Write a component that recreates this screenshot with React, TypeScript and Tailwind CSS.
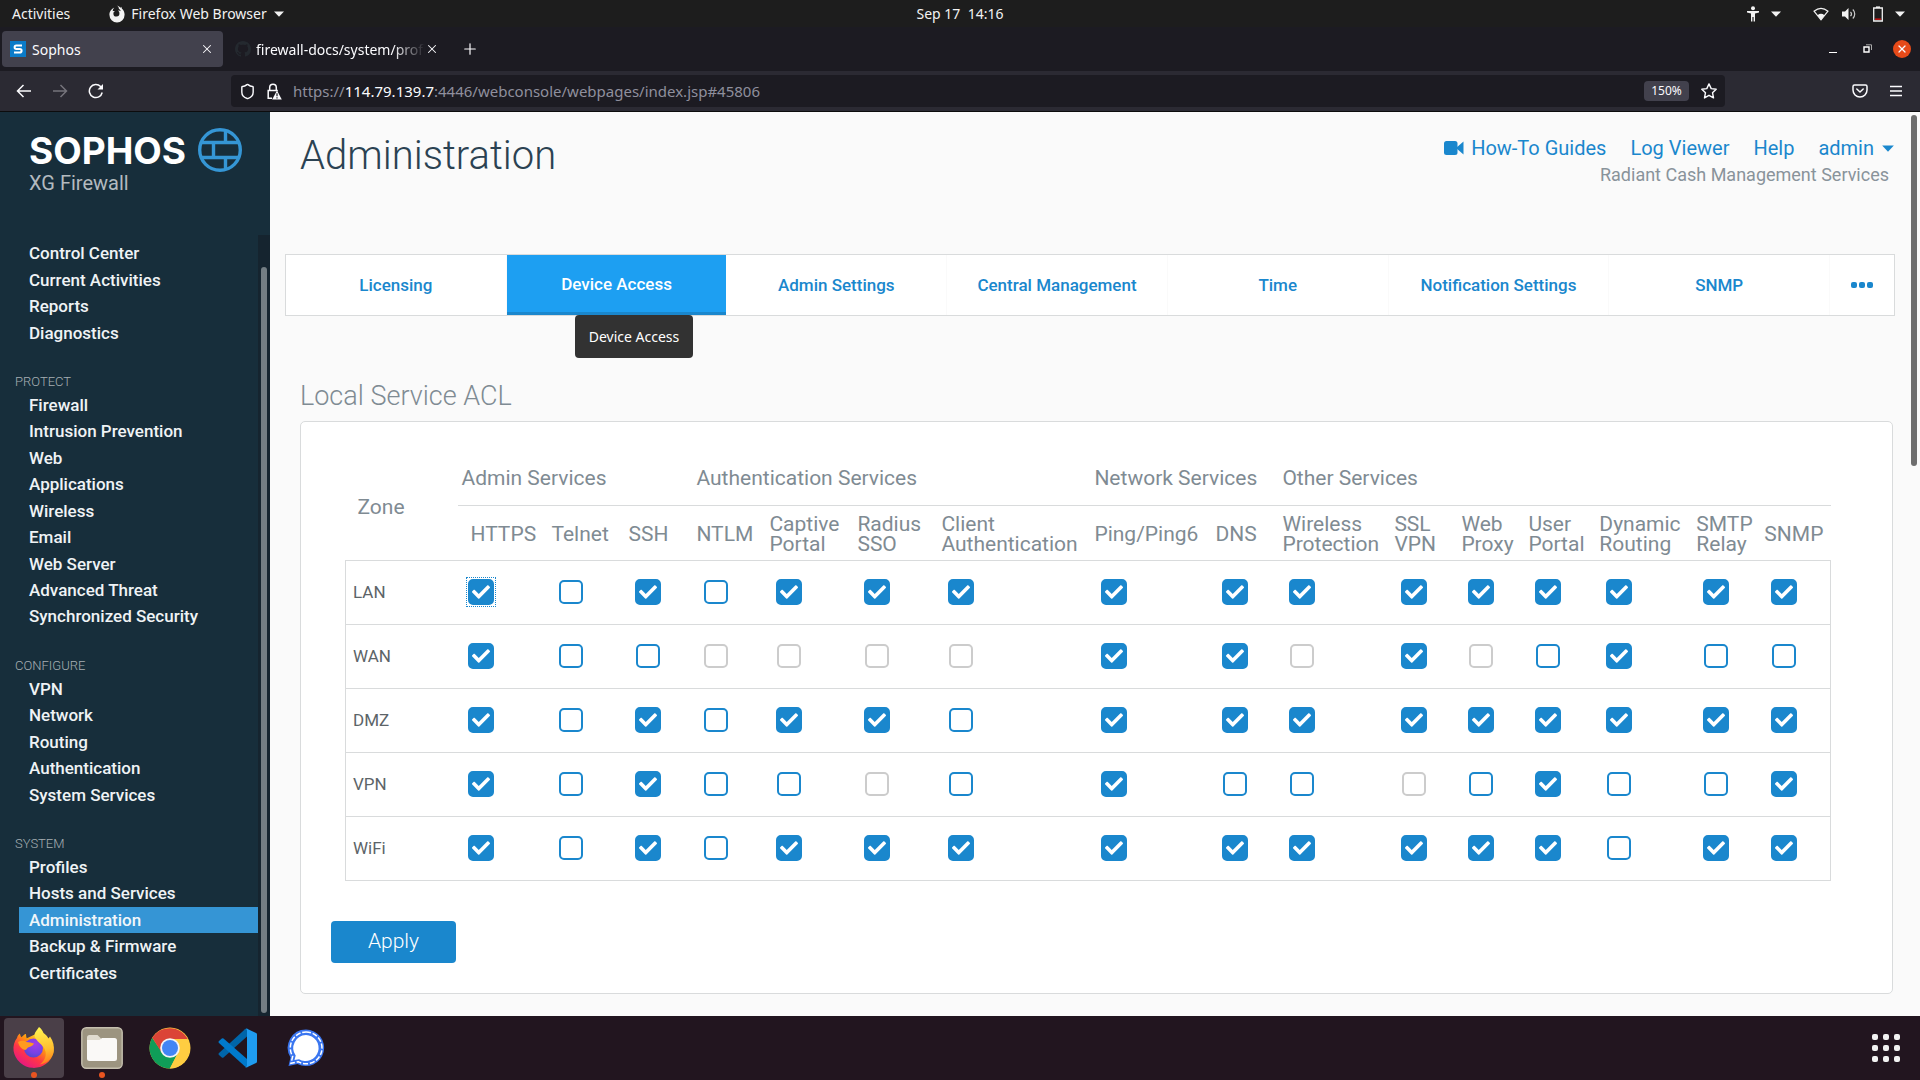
import React from "react";
import { FaCheck } from "react-icons/fa";
import { Plus, Shield, X } from "lucide-react";

type NavGroup = { title?: string; items: string[] };

const NAV: NavGroup[] = [
  { items: ["Control Center", "Current Activities", "Reports", "Diagnostics"] },
  {
    title: "PROTECT",
    items: [
      "Firewall",
      "Intrusion Prevention",
      "Web",
      "Applications",
      "Wireless",
      "Email",
      "Web Server",
      "Advanced Threat",
      "Synchronized Security",
    ],
  },
  { title: "CONFIGURE", items: ["VPN", "Network", "Routing", "Authentication", "System Services"] },
  {
    title: "SYSTEM",
    items: ["Profiles", "Hosts and Services", "Administration", "Backup & Firmware", "Certificates"],
  },
];

const TABS = [
  "Licensing",
  "Device Access",
  "Admin Settings",
  "Central Management",
  "Time",
  "Notification Settings",
  "SNMP",
];

const GROUPS = [
  { name: "Admin Services", span: 3 },
  { name: "Authentication Services", span: 4 },
  { name: "Network Services", span: 2 },
  { name: "Other Services", span: 7 },
];

const SERVICES: { lines: string[]; width: number }[] = [
  { lines: ["HTTPS"], width: 86 },
  { lines: ["Telnet"], width: 77 },
  { lines: ["SSH"], width: 68 },
  { lines: ["NTLM"], width: 73 },
  { lines: ["Captive", "Portal"], width: 88 },
  { lines: ["Radius", "SSO"], width: 84 },
  { lines: ["Client", "Authentication"], width: 153 },
  { lines: ["Ping/Ping6"], width: 121 },
  { lines: ["DNS"], width: 67 },
  { lines: ["Wireless", "Protection"], width: 112 },
  { lines: ["SSL", "VPN"], width: 67 },
  { lines: ["Web", "Proxy"], width: 67 },
  { lines: ["User", "Portal"], width: 71 },
  { lines: ["Dynamic", "Routing"], width: 97 },
  { lines: ["SMTP", "Relay"], width: 68 },
  { lines: ["SNMP"], width: 73 },
];
const ZONE_WIDTH = 113;
const TABLE_WIDTH = 1485;

/* x = on, o = off, d = disabled; one letter per service */
const ZONES = [
  { name: "LAN", state: "xoxoxxxxxxxxxxxx" },
  { name: "WAN", state: "xooddddxxdxdoxoo" },
  { name: "DMZ", state: "xoxoxxoxxxxxxxxx" },
  { name: "VPN", state: "xoxoodoxoodoxoox" },
  { name: "WiFi", state: "xoxoxxxxxxxxxoxx" },
];

function CaretDown({ className }: { className: string }) {
  return (
    <svg viewBox="0 0 10 6" className={className} fill="currentColor" aria-hidden="true">
      <path d="M0 0.5h10L5 5.8z" />
    </svg>
  );
}

function TopBar() {
  return (
    <div className="grid h-[27px] shrink-0 grid-cols-3 items-center bg-[#1d1d1d] text-[14px] text-[#f2f2f2]">
      <div className="flex items-center pl-3">
        <button>Activities</button>
        <button className="ml-[39px] flex items-center">
          <svg viewBox="0 0 16 18" className="mr-[6px] h-[18px] w-4" fill="#f2f2f2" aria-hidden="true">
            <path d="M8 .6c1.3 1 1.8 2 1.9 3.2 .9.5 1.6 1.3 1.9 2.4-.9-.7-1.8-.9-2.8-.7 1 .8 1.5 1.8 1.4 3a3 3 0 0 1-6 .2c0-1.2.6-2 1.6-2.6-.9-.2-1.6-.1-2.2.2-.1-1.300 .4-2.600 1.400-3.500C2.800 3.500 .4 6.400 .4 9.800a7.600 7.600 0 0 0 15.200 0c0-2.600-1-4.800-2.800-6.300l-.5-1.700-.7 1C10.700 1.900 9.500 1.100 8 .6z" />
          </svg>
          Firefox Web Browser
          <CaretDown className="ml-[7px] h-[6px] w-[10px]" />
        </button>
      </div>
      <div className="text-center whitespace-pre">Sep 17  14:16</div>
      <div className="flex items-center justify-end pr-[15px]">
        <svg viewBox="0 0 12 16" className="h-4 w-3" fill="#f2f2f2" aria-hidden="true">
          <circle cx="6" cy="2.200" r="2" />
          <path d="M0 5h12v1.600L8 7.400V15.500H6.600V11H5.400V15.500H4V7.400L0 6.600z" />
        </svg>
        <CaretDown className="ml-3 h-[6px] w-[10px]" />
        <svg viewBox="0 0 16 14" className="ml-8 h-[14px] w-4" aria-hidden="true">
          <path d="M1 4.200Q8-1.500 15 4.200L8 12.800z" fill="none" stroke="#f2f2f2" strokeWidth="1.200" />
          <path d="M4.500 8.200Q8 5.400 11.500 8.200L8 13z" fill="#f2f2f2" />
        </svg>
        <svg viewBox="0 0 16 14" className="ml-3 h-[14px] w-4" aria-hidden="true">
          <path d="M1 4.500h3L7.500 1v12L4 9.500H1z" fill="#f2f2f2" />
          <path d="M9.500 4.800a3.200 3.200 0 0 1 0 4.400M11.800 2.500a6.200 6.200 0 0 1 0 9" fill="none" stroke="#c9c9c9" strokeWidth="1.200" />
        </svg>
        <svg viewBox="0 0 10 16" className="ml-4 h-4 w-[10px]" aria-hidden="true">
          <path d="M.7 2h8.600v13H.7z" fill="none" stroke="#f2f2f2" strokeWidth="1.300" />
          <path d="M3 .4h4V2H3z" fill="#f2f2f2" />
          <path d="M2 12.500h6v1.300H2z" fill="#d11" />
        </svg>
        <CaretDown className="ml-3 h-[6px] w-[10px]" />
      </div>
    </div>
  );
}

function TabStrip() {
  return (
    <div className="flex h-11 shrink-0 items-center bg-[#1c1b22] text-[14px] text-[#fbfbfe]">
      <div className="ml-[2px] flex h-9 w-[221px] items-center rounded bg-[#42414d] pr-[9px] pl-2">
        <svg viewBox="0 0 16 16" className="mr-[6px] size-4" aria-hidden="true">
          <path d="M0 0h16v16H0z" fill="#0b7bc8" />
          <path d="M12 4.500H6.300a1.700 1.700 0 0 0 0 3.400H9.800a1.700 1.700 0 0 1 0 3.600H4" fill="none" stroke="#fff" strokeWidth="2" />
        </svg>
        <span className="flex-1">Sophos</span>
        <button aria-label="Close Sophos tab">
          <X className="size-[14px]" strokeWidth={1.800} />
        </button>
      </div>
      <div className="ml-3 flex h-9 w-[204px] items-center">
        <svg viewBox="0 0 16 16" className="mr-[5px] size-4 shrink-0" fill="#24292f" aria-hidden="true">
          <path d="M8 0C3.580 0 0 3.580 0 8c0 3.540 2.290 6.530 5.470 7.590.4.070.55-.17.55-.38 0-.19-.01-.82-.01-1.490-2.010.37-2.530-.49-2.690-.94-.09-.23-.48-.94-.82-1.130-.28-.15-.68-.52-.01-.53.63-.01 1.080.58 1.230.82.72 1.210 1.870.87 2.330.66.070-.52.28-.87.51-1.070-1.780-.2-3.640-.89-3.640-3.950 0-.87.31-1.590.82-2.150-.08-.2-.36-1.020.08-2.120 0 0 .67-.21 2.200.82.64-.18 1.320-.27 2-.27s1.360.09 2 .27c1.530-1.040 2.200-.82 2.200-.82.44 1.100.16 1.920.08 2.120.51.56.82 1.270.82 2.150 0 3.070-1.870 3.750-3.650 3.950.29.25.54.73.54 1.480 0 1.070-.01 1.930-.01 2.200 0 .21.15.46.55.38A8.010 8.010 0 0 0 16 8c0-4.420-3.580-8-8-8z" />
        </svg>
        <span className="flex-1 overflow-hidden [mask-image:linear-gradient(to_left,transparent,black_32px)] whitespace-nowrap">
          firewall-docs/system/profiles
        </span>
        <button aria-label="Close firewall-docs tab">
          <X className="size-[14px]" strokeWidth={1.800} />
        </button>
      </div>
      <button aria-label="New tab" className="ml-[22px]">
        <Plus className="size-[18px]" strokeWidth={1.600} />
      </button>
      <div className="ml-auto flex items-center gap-5 pr-[9px]">
        <button aria-label="Minimize" className="h-4 w-[14px]">
          <span className="mt-[7px] block h-px w-2 bg-white" />
        </button>
        <button aria-label="Restore">
          <svg viewBox="0 0 10 10" className="size-[10px]" fill="none" aria-hidden="true">
            <path d="M1 3h5v5H1z" stroke="#fff" strokeWidth="1.400" />
            <path d="M3 .8h5.500V6" stroke="#aaa" strokeWidth="1" />
          </svg>
        </button>
        <button aria-label="Close window" className="grid size-[18px] place-items-center rounded-full bg-[#e64a19]">
          <X className="size-3" strokeWidth={2.400} />
        </button>
      </div>
    </div>
  );
}

function Toolbar() {
  return (
    <div className="flex h-[41px] shrink-0 items-center border-b border-[#0c0c0d] bg-[#2b2a33] text-[#fbfbfe]">
      <div className="flex w-[231px] items-center gap-5 pl-4">
        <button aria-label="Back">
          <svg viewBox="0 0 16 16" className="size-4" fill="none" stroke="currentColor" strokeWidth="1.500" aria-hidden="true">
            <path d="M15 8H1.500M7.500 2L1.500 8l6 6" />
          </svg>
        </button>
        <button aria-label="Forward" className="text-[#75747c]">
          <svg viewBox="0 0 16 16" className="size-4" fill="none" stroke="currentColor" strokeWidth="1.500" aria-hidden="true">
            <path d="M1 8h13.500M8.500 2l6 6-6 6" />
          </svg>
        </button>
        <button aria-label="Reload">
          <svg viewBox="0 0 16 16" className="size-4" fill="none" stroke="currentColor" strokeWidth="1.500" aria-hidden="true">
            <path d="M14.200 9.500A6.500 6.500 0 1 1 12.600 3.600L14.500 5.500" />
            <path d="M15 1v5.500H9.500z" fill="currentColor" stroke="none" />
          </svg>
        </button>
      </div>
      <div className="mr-[127px] flex h-8 flex-1 items-center rounded bg-[#1c1b22] px-2">
        <Shield className="size-[17px]" strokeWidth={2} />
        <svg viewBox="0 0 16 17" className="ml-[10px] h-[17px] w-4" fill="none" aria-hidden="true">
          <path d="M3.700 7V4.600a3.300 3.300 0 0 1 6.600 0V7M6 15.300H2.200V7.500h9.600" stroke="#fbfbfe" strokeWidth="1.500" />
          <path d="M11 7.500l4.800 9H6.200z" fill="#fbfbfe" />
          <path d="M11 10.200v3M11 14.200v1.200" stroke="#1c1b22" strokeWidth="1.200" />
        </svg>
        <div className="ml-[11px] flex-1 text-[15px] whitespace-nowrap text-[#8f8f9d]">
          https://<span className="text-[#fbfbfe]">114.79.139.7</span>:4446/webconsole/webpages/index.jsp#45806
        </div>
        <button className="h-5 w-[45px] rounded-sm bg-[#42414d] text-[12px]">150%</button>
        <button aria-label="Bookmark" className="ml-3">
          <svg viewBox="0 0 16 16" className="size-4" fill="none" stroke="currentColor" strokeWidth="1.400" strokeLinejoin="round" aria-hidden="true">
            <path d="M8 .9l2.200 4.700 5 .6-3.700 3.500 1 5.200L8 12.300l-4.500 2.600 1-5.200L.8 6.200l5-.6z" />
          </svg>
        </button>
      </div>
      <div className="flex items-center gap-[22px] pr-[18px]">
        <button aria-label="Save to Pocket">
          <svg viewBox="0 0 16 14" className="h-[14px] w-4" fill="none" stroke="currentColor" strokeWidth="1.500" strokeLinecap="round" strokeLinejoin="round" aria-hidden="true">
            <path d="M2.500 1h11a1.500 1.500 0 0 1 1.500 1.500V6a7 7 0 0 1-14 0V2.500A1.500 1.500 0 0 1 2.500 1z" />
            <path d="M4.800 5L8 8l3.200-3" />
          </svg>
        </button>
        <button aria-label="Menu">
          <svg viewBox="0 0 12 12" className="size-3" stroke="currentColor" strokeWidth="1.300" aria-hidden="true">
            <path d="M0 1.500h12M0 6h12M0 10.500h12" />
          </svg>
        </button>
      </div>
    </div>
  );
}

function Sidebar() {
  return (
    <aside className="flex w-[270px] shrink-0 flex-col bg-[#172e3b]">
      <div className="flex h-[123px] shrink-0 pt-[15px] pl-[29px]">
        <div className="w-[169px]">
          <div className="font-[Inter,sans-serif] text-[37px] leading-[48px] font-bold text-white">SOPHOS</div>
          <div className="text-[20px] leading-4 text-[#b3babf]">XG Firewall</div>
        </div>
        <svg viewBox="0 0 44 46" className="h-[46px] w-11" fill="none" stroke="#3596d5" strokeWidth="3.400" aria-hidden="true">
          <circle cx="22" cy="23" r="20.300" />
          <path d="M3.500 15.500h37M3.500 30.500h37M27.500 3.500v12M15.500 15.500v15M27.500 30.500v12" />
        </svg>
      </div>
      <div className="flex flex-1">
        <nav className="flex flex-1 flex-col pt-[5px] pb-[30px]">
          {NAV.map((g, i) => (
            <React.Fragment key={i}>
              {g.title && (
                <h2 className="h-[46px] shrink-0 pt-[27px] pl-[15px] text-[13px] leading-[18px] font-light text-[#a6aeb3]">
                  {g.title}
                </h2>
              )}
              <ul className="flex basis-0 flex-col pl-[19px]" style={{ flexGrow: g.items.length }}>
                {g.items.map((it) => (
                  <li key={it} className="flex-1">
                    <a
                      href="#"
                      className={
                        it === "Administration"
                          ? "flex h-full items-center bg-[#3595d5] pl-[10px] text-[17px] leading-5 font-medium text-[#f0f6fa]"
                          : "flex h-full items-center pl-[10px] text-[17px] leading-5 font-medium text-[#eff3f5]"
                      }
                    >
                      {it}
                    </a>
                  </li>
                ))}
              </ul>
            </React.Fragment>
          ))}
        </nav>
        <div className="flex w-3 justify-center bg-[#15242f] pt-8 pb-[3px]">
          <div className="w-[6px] rounded-full bg-[#737d83]" />
        </div>
      </div>
    </aside>
  );
}

function PageHeader() {
  return (
    <header className="flex justify-between pr-[26px] pl-[30px]">
      <h1 className="pt-5 text-[40px] leading-[48px] font-light text-[#2b4252]">Administration</h1>
      <div className="pt-6 text-right">
        <div className="flex items-center gap-6 text-[20px] leading-6 text-[#1a87cd]">
          <a href="#" className="flex items-center">
            <svg viewBox="0 0 20 14" className="mr-[7px] h-[14px] w-5" fill="currentColor" aria-hidden="true">
              <rect width="13.500" height="14" rx="2.500" />
              <path d="M12 7L19.500.5v13z" />
            </svg>
            How-To Guides
          </a>
          <a href="#">Log Viewer</a>
          <a href="#">Help</a>
          <button className="flex items-center">
            admin
            <CaretDown className="ml-2 h-[7px] w-3" />
          </button>
        </div>
        <div className="pr-[5px] text-[18px] leading-[30px] text-[#89939a]">Radiant Cash Management Services</div>
      </div>
    </header>
  );
}

function PageTabs() {
  return (
    <div className="mt-16 mr-[25px] ml-[15px] flex h-[62px] border border-[#d9dbdc] bg-white">
      {TABS.map((t) =>
        t === "Device Access" ? (
          <div key={t} className="relative flex-1">
            <button className="h-full w-full border-b-[3px] border-[#1a87cd] bg-[#1d9ff2] pt-[2px] text-[17px] font-medium text-white">
              {t}
            </button>
            <div
              role="tooltip"
              className="absolute top-[60px] left-[68px] z-10 rounded bg-[#323232] px-[14px] text-[14px] leading-[43px] whitespace-nowrap text-white [font-family:'Noto_Sans',sans-serif]"
            >
              Device Access
            </div>
          </div>
        ) : (
          <button key={t} className="flex-1 border-r border-[#fafafa] pt-[2px] text-[17px] font-medium text-[#1a87cd]">
            {t}
          </button>
        ),
      )}
      <button aria-label="More tabs" className="flex w-16 items-center justify-center gap-[2px] text-[#1a87cd]">
        <span className="size-[6px] rounded-[2px] bg-current" />
        <span className="size-[6px] rounded-[2px] bg-current" />
        <span className="size-[6px] rounded-[2px] bg-current" />
      </button>
    </div>
  );
}

function ServiceBox({ label, state, focused }: { label: string; state: string; focused: boolean }) {
  return (
    <span
      className={
        focused
          ? "grid size-[26px] place-items-center outline-1 outline-offset-1 outline-[#1a87cd] outline-dotted"
          : "grid size-[26px] place-items-center"
      }
    >
      <input
        type="checkbox"
        aria-label={label}
        defaultChecked={state === "x"}
        disabled={state === "d"}
        className="peer size-6 appearance-none rounded-[5px] border-2 border-[#1a87cd] bg-white [grid-area:1/1] checked:size-[26px] checked:bg-[#1a87cd] disabled:border-[#cccccc]"
      />
      <FaCheck className="pointer-events-none hidden size-[18px] text-white [grid-area:1/1] peer-checked:block" />
    </span>
  );
}

function AclTable() {
  return (
    <table className="w-full table-fixed border-collapse text-left">
      <colgroup>
        <col style={{ width: `${(ZONE_WIDTH / TABLE_WIDTH) * 100}%` }} />
        {SERVICES.map((s) => (
          <col key={s.lines.join(" ")} style={{ width: `${(s.width / TABLE_WIDTH) * 100}%` }} />
        ))}
      </colgroup>
      <thead className="text-[21px] leading-5 text-[#7f8b93]">
        <tr className="h-[53px]">
          <th rowSpan={2} scope="col" className="pt-[2px] pl-3 font-normal">
            Zone
          </th>
          {GROUPS.map((g, i) => (
            <th
              key={g.name}
              colSpan={g.span}
              scope="colgroup"
              className={
                i === 0
                  ? "border-b border-[#d9dbdc] pl-[3px] font-normal whitespace-nowrap"
                  : "border-b border-[#d9dbdc] pl-[7px] font-normal whitespace-nowrap"
              }
            >
              {g.name}
            </th>
          ))}
        </tr>
        <tr className="h-[55px]">
          {SERVICES.map((s, i) => (
            <th
              key={s.lines.join(" ")}
              scope="col"
              className={
                i === 0
                  ? "pt-[2px] pl-3 font-normal whitespace-nowrap"
                  : "pt-[2px] pl-[7px] font-normal whitespace-nowrap"
              }
            >
              {s.lines.map((l) => (
                <span key={l} className="block">
                  {l}
                </span>
              ))}
            </th>
          ))}
        </tr>
      </thead>
      <tbody className="border border-[#d9dbdc]">
        {ZONES.map((z) => (
          <tr key={z.name} className="h-16 border-t border-[#d9dbdc]">
            <th scope="row" className="pt-[2px] pl-[7px] text-[17px] font-normal text-[#5c6468]">
              {z.name}
            </th>
            {SERVICES.map((s, i) => (
              <td key={s.lines.join(" ")} className={i === 0 ? "pl-[10px]" : "pl-[14px]"}>
                <ServiceBox
                  label={`${z.name} ${s.lines.join(" ")}`}
                  state={z.state[i]}
                  focused={z.name === "LAN" && i === 0}
                />
              </td>
            ))}
          </tr>
        ))}
      </tbody>
    </table>
  );
}

function FirefoxIcon() {
  return (
    <svg viewBox="0 0 42 42" className="size-[42px]" aria-hidden="true">
      <defs>
        <linearGradient id="ffBody" x1="0.85" y1="0.1" x2="0.2" y2="0.95">
          <stop offset="0" stopColor="#fff44f" />
          <stop offset="0.35" stopColor="#ff980e" />
          <stop offset="0.65" stopColor="#ff3647" />
          <stop offset="1" stopColor="#e31587" />
        </linearGradient>
        <radialGradient id="ffGlobe" cx="0.6" cy="0.3" r="0.8">
          <stop offset="0" stopColor="#a53be8" />
          <stop offset="0.6" stopColor="#7542e5" />
          <stop offset="1" stopColor="#4a49c8" />
        </radialGradient>
        <linearGradient id="ffTail" x1="0.5" y1="0" x2="0.6" y2="1">
          <stop offset="0" stopColor="#fff44f" />
          <stop offset="0.6" stopColor="#ffbd2f" />
          <stop offset="1" stopColor="#ff7a1a" />
        </linearGradient>
      </defs>
      <path d="M4 11c.4-2 1.700-3.600 3-4.500.1 1.600.6 2.700 1.500 3.700 2-1.500 3.500-3.500 4.500-3 .2 1.500.1 2.700.8 4L27 5l11 9c1.500 3 3.500 7 2.500 12A20.500 20.500 0 0 1 .6 24C0 19 1.200 14.500 4 11z" fill="url(#ffBody)" />
      <circle cx="20.500" cy="21" r="9.500" fill="url(#ffGlobe)" />
      <path d="M26 0c2.300 1.700 3.500 3.700 4.500 6 2.200 1.600 4 3.500 5 5.500l1.500-2c3.500 5 4.500 10 3.500 15-1.500 7.500-7 12-14 13 5-3.500 7-8 6-13-.8-4-3.500-6-6-8.500-2.500-2.600-4.700-4.500-5-8C21.500 5.500 24 3 26 0z" fill="url(#ffTail)" />
      <path d="M5 15c3-2 6.500-1.500 8.500 0 2.500.2 5 .6 7.500 1.500-1 2.500-3.500 3-5.500 3.800-2 1-1.500 2.500-3.500 2.700C8.500 22 6 19.500 5 15z" fill="#ff9a1f" />
    </svg>
  );
}

function FilesIcon() {
  return (
    <svg viewBox="0 0 42 42" className="size-[42px]" aria-hidden="true">
      <rect x=".8" y=".8" width="40.400" height="40.400" rx="4.500" fill="#9c9480" stroke="#c5bfae" strokeWidth="1.400" />
      <path d="M6 10.500A2.500 2.500 0 0 1 8.500 8h8l4 4v6H6z" fill="#e0dbcf" />
      <path d="M6 13h12.500l2.500-2h12.500a2.500 2.500 0 0 1 2.500 2.500V31.500A2.500 2.500 0 0 1 33.500 34h-25A2.500 2.500 0 0 1 6 31.500z" fill="#faf9f7" />
    </svg>
  );
}

function ChromeIcon() {
  return (
    <svg viewBox="0 0 42 42" className="size-[42px]" aria-hidden="true">
      <circle cx="21" cy="21" r="20.500" fill="#ffcd41" />
      <path d="M3.250 10.750A20.500 20.500 0 0 0 21 41.500L29 25.500 21 21 13.500 26z" fill="#0f9d58" />
      <path d="M3.250 10.750L13 26l9-14h16.700A20.500 20.500 0 0 0 3.250 10.750z" fill="#db4437" />
      <path d="M38.700 12A20.500 20.500 0 0 1 20.800 41.500L29 26V12z" fill="#ffcd41" />
      <circle cx="21" cy="21" r="9.800" fill="#f4f4f4" />
      <circle cx="21" cy="21" r="8" fill="#4285f4" />
    </svg>
  );
}

function CodeIcon() {
  return (
    <svg viewBox="0 0 40 40" className="size-10" aria-hidden="true">
      <path d="M29 8.500L5.500 29.500a1.300 1.300 0 0 1-1.700 0L1 27a1.300 1.300 0 0 1 0-1.900L27 1.200A3 3 0 0 1 29.500.5z" fill="#0065a9" />
      <path d="M29 31L5.500 10.500a1.300 1.300 0 0 0-1.700 0L1 13a1.300 1.300 0 0 0 0 1.900L27 38.500a3 3 0 0 0 2.500.7z" fill="#007acc" />
      <path d="M29 0.700l9 4.200c.7.300 1 .8 1 1.500v27.200c0 .7-.3 1.200-1 1.500l-9 4.200c-1 .2-1.700 0-2.300-.6 1 .6 2.300 0 2.300-1.200V2.500C29 1.300 27.700.7 26.700 1.300 27.300.7 28 .5 29 .7z" fill="#1f9cf0" />
    </svg>
  );
}

function SignalIcon() {
  return (
    <svg viewBox="0 0 40 40" className="size-10" aria-hidden="true">
      <path d="M20 1.500a18.300 18.300 0 1 1-8.500 34.600L2.500 38l2-8.500A18.300 18.300 0 0 1 20 1.500z" fill="#3a76f0" />
      <path d="M20 4a15.900 15.900 0 1 1-7.800 29.700L5 35.300l1.700-7A15.900 15.900 0 0 1 20 4z" fill="none" stroke="#fff" strokeWidth="1.500" strokeDasharray="5 1.800" />
      <path d="M20 7a13 13 0 1 1-7 24.200L8.500 32l1.200-4.500A13 13 0 0 1 20 7z" fill="#fff" />
    </svg>
  );
}

const DOCK = [
  { name: "Firefox", icon: <FirefoxIcon />, running: true },
  { name: "Files", icon: <FilesIcon />, running: true },
  { name: "Chrome", icon: <ChromeIcon />, running: false },
  { name: "Visual Studio Code", icon: <CodeIcon />, running: false },
  { name: "Signal", icon: <SignalIcon />, running: false },
];

function Dock() {
  return (
    <div className="flex h-16 shrink-0 items-center gap-2 bg-[#22151f] pr-5 pl-1">
      {DOCK.map((d) => (
        <button
          key={d.name}
          aria-label={d.name}
          className={
            d.name === "Firefox"
              ? "relative grid size-[60px] place-items-center rounded bg-[#4a3f48]"
              : "relative grid size-[60px] place-items-center"
          }
        >
          {d.icon}
          {d.running && <span className="absolute bottom-0 left-[27px] size-[6px] rounded-full bg-[#e95420]" />}
        </button>
      ))}
      <button aria-label="Show Applications" className="ml-auto grid grid-cols-3 gap-[5px]">
        {Array.from({ length: 9 }, (_, i) => (
          <span key={i} className="size-[6px] rounded-[2px] bg-[#f2f2f2]" />
        ))}
      </button>
    </div>
  );
}

export default function App() {
  return (
    <div className="flex h-screen flex-col overflow-hidden [font-family:'Noto_Sans',sans-serif]">
      <TopBar />
      <TabStrip />
      <Toolbar />
      <div className="flex min-h-0 flex-1 bg-[#fafafa] [font-family:Roboto,sans-serif]">
        <Sidebar />
        <main className="min-w-0 flex-1">
          <PageHeader />
          <PageTabs />
          <h2 className="mt-[60px] pl-[30px] text-[27px] leading-10 font-light text-[#7f8b93]">Local Service ACL</h2>
          <section className="mt-[5px] mr-[27px] ml-[30px] rounded-[5px] border border-[#d9dbdc] bg-white pt-[30px] pr-[61px] pb-[30px] pl-11">
            <AclTable />
            <button className="mt-10 -ml-[14px] h-[42px] w-[125px] rounded bg-[#1a87cd] text-[21px] font-light text-white">
              Apply
            </button>
          </section>
        </main>
        <div className="-ml-[9px] w-[9px] pt-[3px]">
          <div className="h-[351px] w-[6px] rounded-full bg-[#6e6e6e]" />
        </div>
      </div>
      <Dock />
    </div>
  );
}
